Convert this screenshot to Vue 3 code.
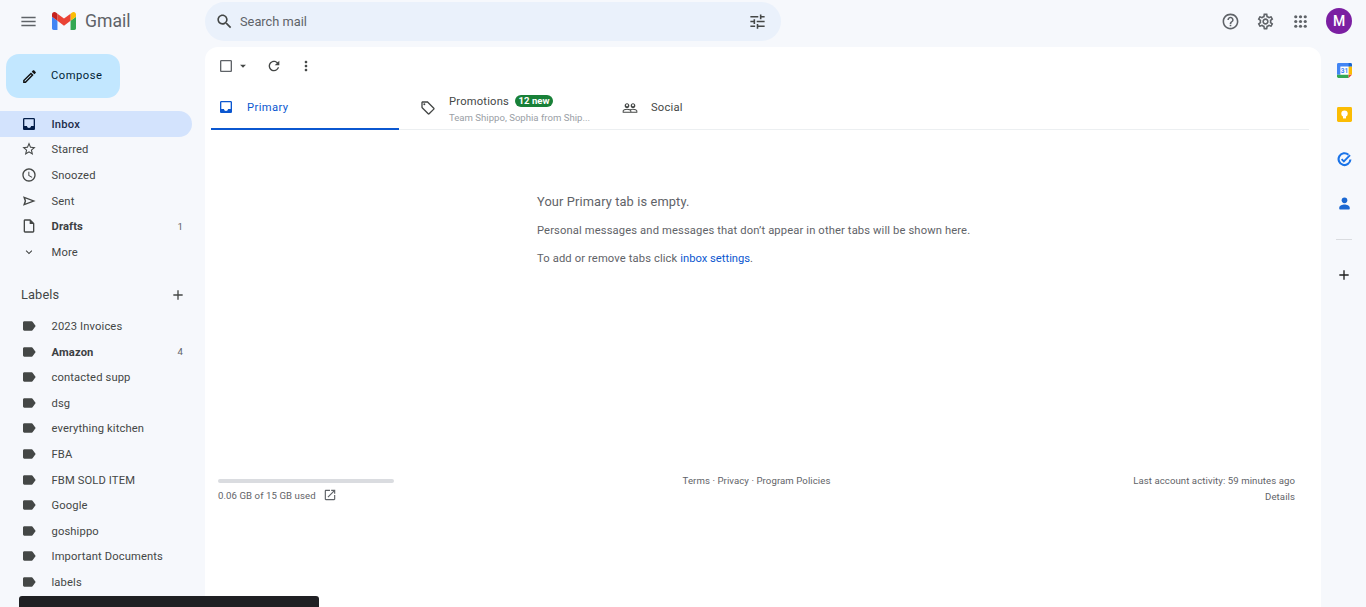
<template>
  <div class="page">
    <header class="topbar">
      <div class="brand">
        <svg class="icon menu-icon" viewBox="0 0 24 24"><path :d="icons.menu" /></svg>
        <svg class="logo" viewBox="52 42 88 66">
          <path fill="#4285f4" d="M58 108h14V74L52 59v43c0 3.32 2.69 6 6 6" />
          <path fill="#34a853" d="M120 108h14c3.32 0 6-2.69 6-6V59l-20 15" />
          <path fill="#fbbc04" d="M120 48v26l20-15v-8c0-7.42-8.47-11.65-14.4-7.2" />
          <path fill="#ea4335" d="M72 74V48l24 18 24-18v26L96 92" />
          <path fill="#c5221f" d="M52 51v8l20 15V48l-5.6-4.2c-5.94-4.45-14.4-.22-14.4 7.2" />
        </svg>
        <span class="wordmark">Gmail</span>
      </div>
      <div class="search">
        <svg class="icon search-icon" viewBox="0 0 24 24"><path :d="icons.search" /></svg>
        <span class="search-text">Search mail</span>
        <svg class="icon tune-icon" viewBox="0 0 24 24"><path :d="icons.tune" /></svg>
      </div>
      <div class="top-actions">
        <span class="top-btn"><svg class="icon" viewBox="0 0 24 24"><path :d="icons.help" /></svg></span>
        <span class="top-btn"><svg class="icon" viewBox="0 0 24 24"><path :d="icons.settings" /></svg></span>
        <span class="top-btn">
          <svg class="icon" viewBox="0 0 24 24">
            <template v-for="y in [6, 12, 18]" :key="y">
              <circle v-for="x in [6, 12, 18]" :key="x" :cx="x" :cy="y" r="2" />
            </template>
          </svg>
        </span>
        <span class="avatar">M</span>
      </div>
    </header>

    <div class="body-row">
      <aside class="sidebar">
        <button class="compose">
          <svg class="icon compose-icon" viewBox="0 0 24 24"><path :d="icons.edit" /></svg>
          <span class="compose-text">Compose</span>
        </button>
        <nav class="nav">
          <div v-for="item in navItems" :key="item.name" class="row" :class="{ active: item.active, bold: item.bold }">
            <svg class="row-icon" :class="{ small: item.small }" viewBox="0 0 24 24"><path :d="icons[item.icon]" /></svg>
            <span class="row-name">{{ item.name }}</span>
            <span v-if="item.count" class="row-count">{{ item.count }}</span>
          </div>
        </nav>
        <div class="labels-head">
          <span>Labels</span>
          <svg class="labels-add" viewBox="0 0 24 24"><path :d="icons.add" /></svg>
        </div>
        <div v-for="label in labels" :key="label.name" class="row" :class="{ bold: label.bold }">
          <svg class="row-icon" viewBox="0 0 24 24"><path :d="icons.label" /></svg>
          <span class="row-name">{{ label.name }}</span>
          <span v-if="label.count" class="row-count">{{ label.count }}</span>
        </div>
      </aside>

      <main class="card">
        <div class="toolbar">
          <svg class="tool-icon" viewBox="0 0 24 24"><path :d="icons.checkbox" /></svg>
          <svg class="caret" viewBox="0 0 24 24"><path d="M7 10l5 5 5-5z" /></svg>
          <svg class="tool-icon refresh" viewBox="0 0 24 24"><path :d="icons.refresh" /></svg>
          <svg class="tool-icon more" viewBox="0 0 24 24"><path :d="icons.moreVert" /></svg>
        </div>

        <div class="tabs">
          <div class="tab primary">
            <svg class="tab-icon" viewBox="0 0 24 24"><path :d="icons.inbox" /></svg>
            <span>Primary</span>
          </div>
          <div class="tab promotions">
            <svg class="tab-icon" viewBox="0 0 24 24">
              <path :d="icons.tag" />
              <circle cx="6.5" cy="6.5" r="1.5" />
            </svg>
            <div class="promo-text">
              <div class="promo-top">
                <span>Promotions</span>
                <span class="badge">12 new</span>
              </div>
              <div class="promo-sub">Team Shippo, Sophia from Ship...</div>
            </div>
          </div>
          <div class="tab social">
            <svg class="tab-icon" viewBox="0 0 24 24"><path :d="icons.people" /></svg>
            <span>Social</span>
          </div>
        </div>

        <section class="empty">
          <h2>Your Primary tab is empty.</h2>
          <p>Personal messages and messages that don’t appear in other tabs will be shown here.</p>
          <p>To add or remove tabs click <a>inbox settings</a>.</p>
        </section>

        <footer class="foot">
          <div class="storage">
            <div class="storage-bar"></div>
            <div class="storage-text">
              <span>0.06 GB of 15 GB used</span>
              <svg class="ext-icon" viewBox="0 0 24 24"><path :d="icons.external" /></svg>
            </div>
          </div>
          <div class="foot-links">Terms · Privacy · Program Policies</div>
          <div class="foot-activity">
            <div>Last account activity: 59 minutes ago</div>
            <div class="details">Details</div>
          </div>
        </footer>
      </main>

      <aside class="rail">
        <svg class="rail-icon" viewBox="0 0 16 16">
          <rect x="0" y="0" width="16" height="16" rx="1.5" fill="#fff" />
          <path fill="#4285f4" d="M1.5 0h12v3.6H3.6V12.4H0V1.5A1.5 1.5 0 0 1 1.5 0z" />
          <path fill="#fbbc04" d="M12.4 3.6H16v8.8h-3.6z" />
          <path fill="#34a853" d="M0 12.4h12.4V16H1.5A1.5 1.5 0 0 1 0 14.5z" />
          <path fill="#1967d2" d="M12.4 0H14.5A1.5 1.5 0 0 1 16 1.5V3.6H12.4z" />
          <path fill="#ea4335" d="M12.4 12.4H16L12.4 16z" />
          <text x="8" y="10.6" text-anchor="middle" class="cal-num">31</text>
        </svg>
        <svg class="rail-icon" viewBox="0 0 16 16">
          <rect width="16" height="16" rx="1.5" fill="#fbbc04" />
          <circle cx="8" cy="7" r="3.4" fill="#fff" />
          <rect x="6.4" y="9.6" width="3.2" height="2.6" fill="#fff" />
        </svg>
        <svg class="rail-icon" viewBox="0 0 16 16">
          <path fill="none" stroke="#1a73e8" stroke-width="2.3" d="M12.2 2.9A6.3 6.3 0 1 0 14.3 8" />
          <path fill="none" stroke="#1a73e8" stroke-width="2" d="M4.9 7.6l2.4 2.4 6.6-6.6" />
        </svg>
        <svg class="rail-icon" viewBox="0 0 16 16">
          <circle cx="8" cy="4.6" r="3" fill="#1a67d2" />
          <path fill="#1a67d2" d="M2.4 13.6v-1.2c0-2.2 3.4-3.4 5.6-3.4s5.6 1.2 5.6 3.4v1.2a.8.8 0 0 1-.8.8H3.2a.8.8 0 0 1-.8-.8z" />
        </svg>
        <div class="rail-line"></div>
        <svg class="rail-add" viewBox="0 0 24 24"><path :d="icons.add" /></svg>
      </aside>
    </div>

    <div class="toast"></div>
  </div>
</template>

<script setup>
const icons = {
  menu: 'M3 18h18v-2H3v2zm0-5h18v-2H3v2zm0-7v2h18V6H3z',
  search: 'M15.5 14h-.79l-.28-.27C15.41 12.59 16 11.11 16 9.5 16 5.91 13.09 3 9.5 3S3 5.91 3 9.5 5.91 16 9.5 16c1.61 0 3.09-.59 4.23-1.57l.27.28v.79l5 4.99L20.49 19l-4.99-5zm-6 0C7.01 14 5 11.99 5 9.5S7.01 5 9.5 5 14 7.01 14 9.5 11.99 14 9.5 14z',
  tune: 'M3 17v2h6v-2H3zM3 5v2h10V5H3zm10 16v-2h8v-2h-8v-2h-2v6h2zM7 9v2H3v2h4v2h2V9H7zm14 4v-2H11v2h10zm-6-4h2V7h4V5h-4V3h-2v6z',
  help: 'M11 18h2v-2h-2v2zm1-16C6.48 2 2 6.48 2 12s4.48 10 10 10 10-4.48 10-10S17.52 2 12 2zm0 18c-4.41 0-8-3.59-8-8s3.59-8 8-8 8 3.59 8 8-3.59 8-8 8zm0-14c-2.21 0-4 1.79-4 4h2c0-1.1.9-2 2-2s2 .9 2 2c0 2-3 1.75-3 5h2c0-2.25 3-2.5 3-5 0-2.21-1.79-4-4-4z',
  settings: 'M19.43 12.98c.04-.32.07-.64.07-.98 0-.34-.03-.66-.07-.98l2.11-1.65c.19-.15.24-.42.12-.64l-2-3.46c-.09-.16-.26-.25-.44-.25-.06 0-.12.01-.17.03l-2.49 1c-.52-.4-1.08-.73-1.69-.98l-.38-2.65C14.46 2.18 14.25 2 14 2h-4c-.25 0-.46.18-.49.42l-.38 2.65c-.61.25-1.17.59-1.69.98l-2.49-1c-.06-.02-.12-.03-.18-.03-.17 0-.34.09-.43.25l-2 3.46c-.13.22-.07.49.12.64l2.11 1.65c-.04.32-.07.65-.07.98 0 .33.03.66.07.98l-2.11 1.65c-.19.15-.24.42-.12.64l2 3.46c.09.16.26.25.44.25.06 0 .12-.01.17-.03l2.49-1c.52.4 1.08.73 1.69.98l.38 2.65c.03.24.24.42.49.42h4c.25 0 .46-.18.49-.42l.38-2.65c.61-.25 1.17-.59 1.69-.98l2.49 1c.06.02.12.03.18.03.17 0 .34-.09.43-.25l2-3.46c.12-.22.07-.49-.12-.64l-2.11-1.65zm-1.98-1.71c.04.31.05.52.05.73 0 .21-.02.43-.05.73l-.14 1.13.89.7 1.08.84-.7 1.21-1.27-.51-1.04-.42-.9.68c-.43.32-.84.56-1.25.73l-1.06.43-.16 1.13-.2 1.35h-1.4l-.19-1.35-.16-1.13-1.06-.43c-.43-.18-.83-.41-1.23-.71l-.91-.7-1.06.43-1.27.51-.7-1.21 1.08-.84.89-.7-.14-1.13c-.03-.31-.05-.54-.05-.74s.02-.43.05-.73l.14-1.13-.89-.7-1.08-.84.7-1.21 1.27.51 1.04.42.9-.68c.43-.32.84-.56 1.25-.73l1.06-.43.16-1.13.2-1.35h1.39l.19 1.35.16 1.13 1.06.43c.43.18.83.41 1.23.71l.91.7 1.06-.43 1.27-.51.7 1.21-1.07.85-.89.7.14 1.13zM12 8c-2.21 0-4 1.79-4 4s1.79 4 4 4 4-1.79 4-4-1.79-4-4-4zm0 6c-1.1 0-2-.9-2-2s.9-2 2-2 2 .9 2 2-.9 2-2 2z',
  edit: 'M3 17.25V21h3.75L17.81 9.94l-3.75-3.75L3 17.25zM5.92 19H5v-.92l9.06-9.06.92.92L5.92 19zM20.71 5.63l-2.34-2.34c-.2-.2-.45-.29-.71-.29s-.51.1-.7.29l-1.83 1.83 3.75 3.75 1.83-1.83c.39-.39.39-1.02 0-1.41z',
  inbox: 'M19 3H5c-1.1 0-2 .9-2 2v14c0 1.1.9 2 2 2h14c1.1 0 2-.9 2-2V5c0-1.1-.9-2-2-2zm0 12h-4c0 1.66-1.34 3-3 3s-3-1.34-3-3H5V5h14v10z',
  star: 'M22 9.24l-7.19-.62L12 2 9.19 8.63 2 9.24l5.46 4.73L5.82 21 12 17.27 18.18 21l-1.63-7.03L22 9.24zM12 15.4l-3.76 2.27 1-4.28-3.32-2.88 4.38-.38L12 6.1l1.71 4.04 4.38.38-3.32 2.88 1 4.28L12 15.4z',
  clock: 'M11.99 2C6.47 2 2 6.48 2 12s4.47 10 9.99 10C17.52 22 22 17.52 22 12S17.52 2 11.99 2zM12 20c-4.42 0-8-3.58-8-8s3.58-8 8-8 8 3.58 8 8-3.58 8-8 8zm.5-13H11v6l5.25 3.15.75-1.23-4.5-2.67z',
  send: 'M3 5l19 7-19 7 2.5-7zM6.6 8.3L7.7 12l-1.1 3.7L16.5 12z',
  draft: 'M14 2H6c-1.1 0-2 .9-2 2v16c0 1.1.9 2 2 2h12c1.1 0 2-.9 2-2V8l-6-6zM6 20V4h7v5h5v11H6z',
  expand: 'M16.59 8.59L12 13.17 7.41 8.59 6 10l6 6 6-6z',
  add: 'M19 13h-6v6h-2v-6H5v-2h6V5h2v6h6v2z',
  label: 'M17.63 5.84C17.27 5.33 16.67 5 16 5L5 5.01C3.9 5.01 3 5.9 3 7v10c0 1.1.9 1.99 2 1.99L16 19c.67 0 1.27-.33 1.63-.84L22 12l-4.37-6.16z',
  checkbox: 'M19 5v14H5V5h14m0-2H5c-1.1 0-2 .9-2 2v14c0 1.1.9 2 2 2h14c1.1 0 2-.9 2-2V5c0-1.1-.9-2-2-2z',
  refresh: 'M17.65 6.35C16.2 4.9 14.21 4 12 4c-4.42 0-7.99 3.58-7.99 8s3.57 8 7.99 8c3.73 0 6.84-2.55 7.73-6h-2.08c-.82 2.33-3.04 4-5.65 4-3.31 0-6-2.69-6-6s2.69-6 6-6c1.66 0 3.14.69 4.22 1.78L13 11h7V4l-2.35 2.35z',
  moreVert: 'M12 8c1.1 0 2-.9 2-2s-.9-2-2-2-2 .9-2 2 .9 2 2 2zm0 2c-1.1 0-2 .9-2 2s.9 2 2 2 2-.9 2-2-.9-2-2-2zm0 6c-1.1 0-2 .9-2 2s.9 2 2 2 2-.9 2-2-.9-2-2-2z',
  tag: 'M21.41 11.58l-9-9C12.05 2.22 11.55 2 11 2H4c-1.1 0-2 .9-2 2v7c0 .55.22 1.05.59 1.42l9 9c.36.36.86.58 1.41.58.55 0 1.05-.22 1.41-.59l7-7c.37-.36.59-.86.59-1.41 0-.55-.23-1.06-.59-1.42zM13 20.01L4 11V4h7v-.01l9 9-7 7.02z',
  people: 'M16.5 13c-1.2 0-3.07.34-4.5 1-1.43-.67-3.3-1-4.5-1C5.33 13 1 14.08 1 16.25V19h22v-2.75c0-2.17-4.33-3.25-6.5-3.25zm-4 4.5h-10v-1.25c0-.54 2.56-1.75 5-1.75s5 1.21 5 1.75v1.25zm9 0H14v-1.25c0-.46-.2-.86-.52-1.22.88-.3 1.96-.53 3.02-.53 2.44 0 5 1.21 5 1.75v1.25zM7.5 12c1.93 0 3.5-1.57 3.5-3.5S9.43 5 7.5 5 4 6.57 4 8.5 5.57 12 7.5 12zm0-5.5c.83 0 1.5.67 1.5 1.5s-.67 1.5-1.5 1.5S6 8.83 6 8 6.67 6.5 7.5 6.5zm9 5.5c1.93 0 3.5-1.57 3.5-3.5S18.43 5 16.5 5 13 6.57 13 8.5s1.57 3.5 3.5 3.5zm0-5.5c.83 0 1.5.67 1.5 1.5s-.67 1.5-1.5 1.5S15 8.83 15 8s.67-1.5 1.5-1.5z',
  external: 'M19 19H5V5h7V3H5c-1.11 0-2 .9-2 2v14c0 1.1.89 2 2 2h14c1.1 0 2-.9 2-2v-7h-2v7zM14 3v2h3.59l-9.83 9.83 1.41 1.41L19 6.41V10h2V3h-7z',
}

const navItems = [
  { name: 'Inbox', icon: 'inbox', active: true, bold: true },
  { name: 'Starred', icon: 'star' },
  { name: 'Snoozed', icon: 'clock' },
  { name: 'Sent', icon: 'send' },
  { name: 'Drafts', icon: 'draft', bold: true, count: 1 },
  { name: 'More', icon: 'expand', small: true },
]

const labels = [
  { name: '2023 Invoices' },
  { name: 'Amazon', bold: true, count: 4 },
  { name: 'contacted supp' },
  { name: 'dsg' },
  { name: 'everything kitchen' },
  { name: 'FBA' },
  { name: 'FBM SOLD ITEM' },
  { name: 'Google' },
  { name: 'goshippo' },
  { name: 'Important Documents' },
  { name: 'labels' },
]
</script>

<style scoped>
.page {
  height: 607px;
  overflow: hidden;
  background: #f6f8fc;
  font-family: Roboto, "Liberation Sans", sans-serif;
  color: #444746;
  display: flex;
  flex-direction: column;
}

.icon {
  width: 19px;
  height: 19px;
  fill: #5f6368;
  flex: none;
}

.topbar {
  height: 47px;
  flex: none;
  display: flex;
  align-items: flex-start;
}

.brand {
  width: 205px;
  height: 42px;
  flex: none;
  display: flex;
  align-items: center;
  padding-left: 19px;
  box-sizing: border-box;
}

.logo {
  width: 24px;
  height: 18px;
  margin-left: 14px;
}

.wordmark {
  margin-left: 9px;
  font-size: 17.6px;
  color: #5f6368;
}

.search {
  width: 576px;
  height: 39px;
  margin-top: 2px;
  border-radius: 20px;
  background: #eaf1fb;
  display: flex;
  align-items: center;
  padding: 0 14px 0 10px;
  box-sizing: border-box;
}

.search-icon {
  fill: #444746;
}

.search-text {
  margin-left: 6px;
  font-size: 12.8px;
  color: #5f6368;
}

.tune-icon {
  margin-left: auto;
  fill: #444746;
}

.top-actions {
  margin-left: auto;
  height: 42px;
  display: flex;
  align-items: center;
  padding-right: 14px;
}

.top-btn {
  width: 35px;
  display: flex;
  justify-content: center;
}

.avatar {
  width: 26px;
  height: 26px;
  margin-left: 8.5px;
  border-radius: 50%;
  background: #7b1fa2;
  color: #fff;
  font-size: 14px;
  font-weight: 500;
  display: flex;
  align-items: center;
  justify-content: center;
}

.body-row {
  flex: 1;
  min-height: 0;
  display: flex;
}

.sidebar {
  width: 205px;
  flex: none;
  letter-spacing: 0.13px;
}

.compose {
  width: 114px;
  height: 44px;
  margin: 7px 0 13px 6px;
  padding: 0 0 0 15px;
  border: 0;
  border-radius: 13px;
  background: #c2e7ff;
  color: #001d35;
  font: 400 11.2px Roboto, "Liberation Sans", sans-serif;
  letter-spacing: 0.5px;
  display: flex;
  align-items: center;
  gap: 13px;
}

.compose-text {
  padding-bottom: 2px;
}

.compose-icon {
  width: 17px;
  height: 17px;
  fill: #111;
}

.row {
  height: 25.6px;
  width: 192px;
  box-sizing: border-box;
  padding: 0 9px 0 21px;
  display: flex;
  align-items: center;
  font-size: 11.2px;
  border-radius: 0 13px 13px 0;
}

.row.active {
  background: #d3e3fd;
  color: #041e49;
}

.row.bold .row-name {
  font-weight: 700;
  color: #3c4043;
}

.row.active .row-name {
  font-weight: 500;
  color: #1d2d4a;
  letter-spacing: 0.2px;
}

.row-icon {
  width: 16px;
  height: 16px;
  flex: none;
  fill: #444746;
  fill-rule: evenodd;
}

.row-icon.small {
  transform: scale(0.82);
}

.row.active .row-icon {
  fill: #041e49;
}

.row-name {
  margin-left: 14.5px;
  padding-top: 1px;
}

.row-count {
  margin-left: auto;
  font-size: 9.6px;
  color: #5f6368;
}

.labels-head {
  width: 192px;
  height: 26px;
  box-sizing: border-box;
  margin: 17.4px 0 5.2px;
  padding: 0 6px 0 21px;
  display: flex;
  align-items: center;
  justify-content: space-between;
  font-size: 12.8px;
  color: #444746;
}

.labels-add {
  width: 16px;
  height: 16px;
  fill: #444746;
}

.card {
  flex: 1;
  min-width: 0;
  background: #fff;
  border-radius: 13px 13px 0 0;
  padding: 0 12px 0 6px;
  box-sizing: border-box;
}

.toolbar {
  height: 38px;
  display: flex;
  align-items: center;
  padding-left: 7px;
}

.tool-icon {
  width: 16px;
  height: 16px;
  fill: #5f6368;
}

.caret {
  width: 14px;
  height: 14px;
  margin-left: 2px;
  fill: #444746;
}

.refresh {
  margin-left: 16px;
  fill: #444746;
}

.more {
  margin-left: 16px;
  fill: #444746;
}

.tabs {
  height: 45px;
  display: flex;
  border-bottom: 1px solid #eceff1;
  box-sizing: border-box;
  font-size: 11.2px;
  letter-spacing: 0.2px;
}

.tab {
  display: flex;
  align-items: center;
  gap: 13px;
  height: 45px;
  box-sizing: border-box;
  color: #444746;
}

.tab-icon {
  width: 16px;
  height: 16px;
  flex: none;
  fill: #444746;
}

.primary {
  width: 188px;
  padding: 2px 0 0 7px;
  color: #0b57d0;
  letter-spacing: 0.4px;
  border-bottom: 2px solid #0b57d0;
}

.primary .tab-icon {
  fill: #0b57d0;
  margin-top: -2px;
}

.promotions {
  width: 216px;
  padding-left: 21px;
}

.promo-text {
  padding-top: 2px;
}

.social {
  padding-left: 7px;
}

.promo-top {
  display: flex;
  align-items: center;
  gap: 6px;
}

.badge {
  background: #188038;
  color: #fff;
  font-size: 9.6px;
  font-weight: 700;
  line-height: 12px;
  padding: 0 3.5px;
  border-radius: 7px;
  letter-spacing: 0;
}

.promo-sub {
  margin-top: 4px;
  font-size: 9.6px;
  color: #9aa0a6;
  letter-spacing: 0;
}

.empty {
  padding: 64px 0 0 326px;
  font-size: 11.2px;
  color: #5f6368;
  letter-spacing: 0.13px;
}

.empty h2 {
  margin: 0;
  font-size: 12.8px;
  font-weight: 400;
  line-height: 16px;
}

.empty p {
  margin: 13px 0 0;
  line-height: 15px;
}

.empty a {
  color: #0b57d0;
  letter-spacing: 0;
}

.foot {
  margin-top: 209px;
  padding: 0 14px 0 7px;
  display: grid;
  grid-template-columns: 1fr auto 1fr;
  font-size: 9.6px;
  color: #5f6368;
  letter-spacing: 0.08px;
}

.storage-bar {
  width: 176px;
  height: 4px;
  margin-top: 4px;
  border-radius: 2px;
  background: #dadce0;
}

.storage-text {
  margin-top: 5px;
  display: flex;
  align-items: center;
  gap: 7px;
}

.ext-icon {
  width: 14px;
  height: 14px;
  fill: #5f6368;
}

.foot-activity {
  text-align: right;
}

.details {
  margin-top: 5px;
}

.rail {
  width: 45px;
  flex: none;
  display: flex;
  flex-direction: column;
  align-items: center;
  padding-top: 15.5px;
  box-sizing: border-box;
  gap: 29.5px;
  padding-left: 1px;
}

.rail-icon {
  width: 15px;
  height: 15px;
  flex: none;
}

.cal-num {
  font-size: 7px;
  font-weight: 700;
  fill: #4285f4;
  font-family: Roboto, sans-serif;
}

.rail-line {
  width: 16px;
  height: 1px;
  background: #dadce0;
  margin-top: -2px;
  margin-bottom: -2px;
}

.rail-add {
  width: 16px;
  height: 16px;
  flex: none;
  fill: #1f1f1f;
}

.toast {
  position: fixed;
  left: 19px;
  bottom: 0;
  width: 300px;
  height: 11px;
  background: #1f2023;
  border-radius: 3px 3px 0 0;
}
</style>

<style>
html,
body {
  margin: 0;
  overflow: hidden;
}
</style>
